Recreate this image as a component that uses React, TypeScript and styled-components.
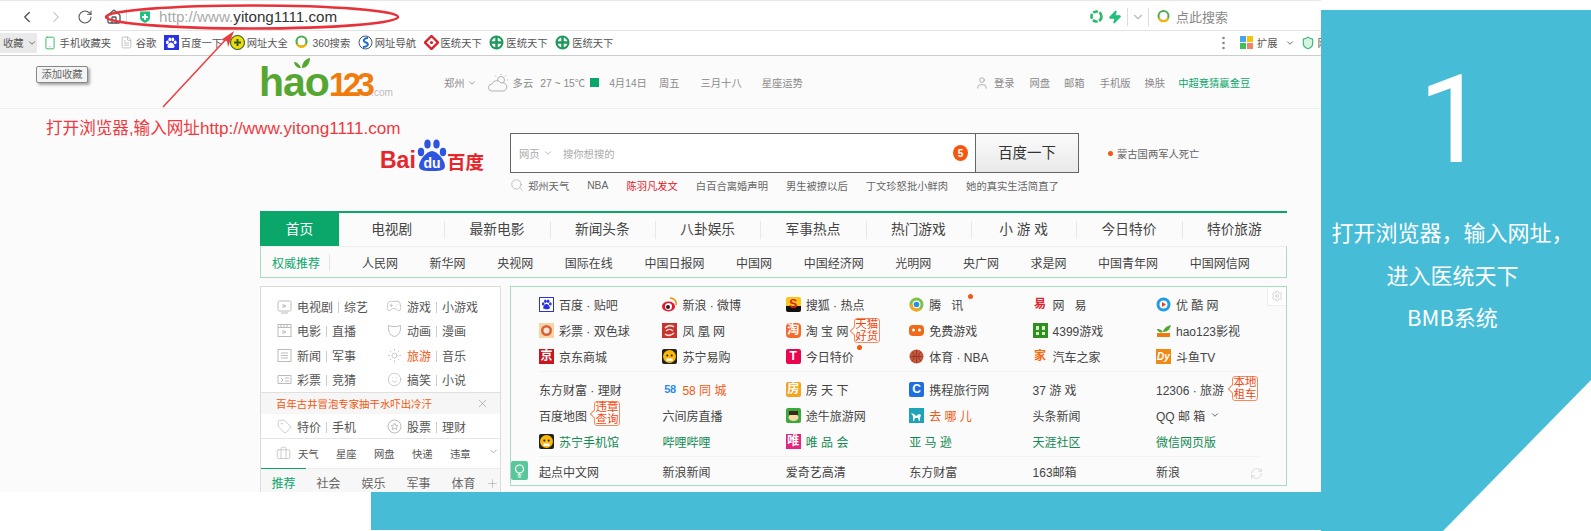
import React from 'react'
import styled, { createGlobalStyle } from 'styled-components'
import {
  Briefcase,
  ChevronDown,
  ChevronLeft,
  ChevronRight,
  FileText,
  Gamepad2,
  Home,
  Plus,
  RefreshCw,
  RotateCw,
  Search,
  Settings,
  Shield,
  Smartphone,
  Smile,
  Sun,
  Tag,
  User,
  X,
  Zap,
} from 'lucide-react'

const BLUE = '#46bcd7'
const GREEN = '#0ba76a'
const SANS = `'Liberation Sans', 'Noto Sans CJK SC', sans-serif`

const GlobalStyle = createGlobalStyle`
  html, body {
    margin: 0;
    padding: 0;
    background: #fff;
    font-family: ${SANS};
  }
`

const Page = styled.div`
  display: flex;
  width: 1591px;
  height: 531px;
  overflow: hidden;
  background: #fff;
`

const LeftColumn = styled.div`
  display: flex;
  flex-direction: column;
  width: 1321px;
  flex: none;
`

const Screenshot = styled.div`
  position: relative;
  height: 492px;
  overflow: hidden;
  background: #fbfbfb;
`

const BottomBand = styled.div`
  margin-left: 371px;
  height: 38px;
  background: ${BLUE};
`

const SidePanel = styled.aside`
  display: flex;
  flex-direction: column;
  align-items: center;
  flex: none;
  box-sizing: border-box;
  margin-top: 10px;
  padding-right: 7px;
  width: 270px;
  height: 521px;
  color: #fff;
  background: ${BLUE};
  clip-path: polygon(0 0, 100% 0, 100% 370px, 122px 100%, 0 100%);
`

const StepNumber = styled.div`
  margin-top: 36px;
  height: 150px;
  font: 400 122px/150px Roboto, ${SANS};
`

const StepLine = styled.div`
  height: 42.6px;
  font: 400 22px/42.6px 'Noto Sans CJK SC', ${SANS};
  white-space: nowrap;
`

const StepLines = styled.div`
  display: flex;
  flex-direction: column;
  align-items: center;
  margin-top: 14px;
`

/* browser chrome */
const Toolbar = styled.div`
  display: flex;
  align-items: center;
  box-sizing: border-box;
  height: 31px;
  padding: 2px 93px 0 18px;
  color: #555;
  background: #fff;
  border-top: 1px solid #e8e8e8;
  border-bottom: 1px solid #e4e4e4;
`

const NavButton = styled.span<{ $faded?: boolean }>`
  display: flex;
  justify-content: center;
  width: 18px;
  margin-right: 11px;
  color: ${(p) => (p.$faded ? '#ccc' : '#555')};
`

const ToolbarDivider = styled.span<{ $left: number }>`
  width: 1px;
  height: 18px;
  margin-left: ${(p) => p.$left}px;
  background: #ddd;
`

const UrlField = styled.div`
  display: flex;
  align-items: center;
  margin-left: 12px;
  font-size: 15.2px;
  color: #333;
`

const UrlScheme = styled.span`
  margin-left: 8px;
  color: #aaa;
`

const ToolbarEnd = styled.div`
  display: flex;
  align-items: center;
  margin-left: auto;
  font-size: 13px;
  color: #888;
`

const Bookmarks = styled.div`
  display: flex;
  align-items: center;
  box-sizing: border-box;
  height: 25px;
  padding-bottom: 1px;
  font-size: 10.3px;
  color: #555;
  background: #fff;
  border-bottom: 1px solid #ccc;
  white-space: nowrap;
`

const FavButton = styled.span`
  display: flex;
  align-items: center;
  gap: 3px;
  box-sizing: border-box;
  width: 38px;
  height: 20px;
  padding-left: 3px;
  margin-right: 6px;
  background: #e9e9e9;
`

const Bookmark = styled.span`
  display: flex;
  align-items: center;
  gap: 2px;
  margin-right: 7.6px;
`

const BookmarkIcon = styled.span`
  display: flex;
  justify-content: center;
  width: 15px;
`

const BookmarkEnd = styled.div`
  display: flex;
  align-items: center;
  gap: 3px;
  margin-left: 601px;
  flex: none;
`

/* hao123 header */
const Header = styled.div`
  display: flex;
  align-items: center;
  box-sizing: border-box;
  height: 53px;
  padding: 1px 0 0 259px;
  font-size: 10.3px;
  color: #8a8a8a;
  border-bottom: 1px solid #eee;
  white-space: nowrap;
`

const LogoMark = styled.div`
  position: relative;
  display: flex;
  align-items: baseline;
  margin-top: -1px;
  width: 136px;
  flex: none;
  font-family: ${SANS};
  font-weight: 700;
`

const LogoGreen = styled.span`
  font-size: 41px;
  line-height: 42px;
  letter-spacing: -1px;
  color: #56a632;
`

const LogoOrange = styled.span`
  font-size: 33px;
  letter-spacing: -4.6px;
  color: #ef7c0c;
`

const LogoDomain = styled.span`
  margin-left: 1px;
  font-size: 10px;
  font-weight: 400;
  color: #bbb;
`

const LogoLeaf = styled.svg`
  position: absolute;
  top: -4px;
  left: 35px;
`

const HeaderItem = styled.span<{ $left: number; $accent?: boolean }>`
  display: flex;
  align-items: center;
  gap: 2px;
  margin-left: ${(p) => p.$left}px;
  color: ${(p) => (p.$accent ? GREEN : 'inherit')};
`

const WeatherNext = styled.span`
  display: inline-block;
  width: 9px;
  height: 9px;
  margin-left: 3px;
  background: ${GREEN};
`

const Tooltip = styled.div`
  position: absolute;
  top: 66px;
  left: 36px;
  box-sizing: border-box;
  width: 52px;
  height: 17px;
  font-size: 10.3px;
  line-height: 15px;
  text-align: center;
  color: #666;
  background: #f4f4f4;
  border: 1px solid #888;
  border-radius: 2px;
  box-shadow: 2px 2px 3px rgba(0, 0, 0, 0.35);
`

/* search */
const SearchRow = styled.div`
  display: flex;
  margin-top: 24px;
  padding-left: 380px;
  height: 40px;
`

const BaiduLogo = styled.div`
  position: relative;
  display: flex;
  align-items: flex-end;
  width: 104px;
  height: 33px;
  margin-top: 5px;
  flex: none;
  font-weight: 700;
  color: #e5262b;
`

const BaiduLatin = styled.span`
  font-size: 23px;
  line-height: 21px;
  width: 37px;
`

const BaiduCjk = styled.span`
  margin-left: 30px;
  font: 700 18.5px/20px 'Noto Sans CJK SC', sans-serif;
`

const BaiduPaw = styled.svg`
  position: absolute;
  top: 0;
  left: 36px;
`

const SearchBox = styled.div`
  display: flex;
  align-items: center;
  box-sizing: border-box;
  width: 466px;
  height: 40px;
  margin-left: 26px;
  padding-left: 8px;
  font-size: 10.3px;
  color: #aaa;
  background: #fff;
  border: 1.5px solid #666;
`

const SearchScope = styled.span`
  display: flex;
  align-items: center;
  gap: 3px;
  width: 44px;
`

const SearchHint = styled.span`
  flex: 1;
`

const SearchCount = styled.span`
  display: flex;
  align-items: center;
  justify-content: center;
  width: 15px;
  height: 16px;
  margin-right: 7px;
  font-size: 10px;
  font-weight: 700;
  color: #fff;
  background: #f4570f;
  border-radius: 50%;
`

const SearchButton = styled.div`
  box-sizing: border-box;
  width: 103px;
  height: 40px;
  font-size: 14.4px;
  line-height: 38px;
  text-align: center;
  color: #333;
  background: linear-gradient(#fbfbfb, #e9e9e9);
  border: 1.5px solid #666;
  border-left: none;
`

const HotTopic = styled.div`
  display: flex;
  align-items: center;
  gap: 4px;
  margin-left: 29px;
  font-size: 10.3px;
  color: #666;
`

const OrangeDot = styled.span`
  width: 5px;
  height: 5px;
  background: #f4570f;
  border-radius: 50%;
`

const Suggestions = styled.div`
  display: flex;
  align-items: center;
  gap: 18px;
  margin-top: 4px;
  padding-left: 510px;
  height: 16px;
  font-size: 10.3px;
  color: #666;
  white-space: nowrap;
`

const Suggestion = styled.span<{ $hot?: boolean }>`
  display: flex;
  align-items: center;
  gap: 4px;
  color: ${(p) => (p.$hot ? '#e8141c' : 'inherit')};
`

/* channel nav */
const Main = styled.div`
  margin: 18px 0 0 260px;
  width: 1027px;
`

const ChannelNav = styled.nav`
  display: grid;
  grid-template-columns: 79px repeat(9, 1fr);
  box-sizing: border-box;
  height: 35px;
  border-top: 2px solid ${GREEN};
`

const Channel = styled.a<{ $active?: boolean }>`
  position: relative;
  font-size: 13.7px;
  line-height: 33px;
  text-align: center;
  white-space: pre;
  color: ${(p) => (p.$active ? '#fff' : '#444')};
  background: ${(p) => (p.$active ? GREEN : 'transparent')};

  & + &::before {
    content: '';
    position: absolute;
    top: 8px;
    left: 0;
    width: 1px;
    height: 18px;
    background: #e8e8e8;
  }
`

const Recommend = styled.div`
  display: flex;
  align-items: center;
  height: 32px;
  box-sizing: border-box;
  padding-left: 11px;
  font-size: 12px;
  color: #444;
  border: 1px solid #a9dcbd;
  border-top: 1px solid #eee;
  white-space: nowrap;
`

const RecommendTitle = styled.span`
  box-sizing: border-box;
  width: 58px;
  margin-right: 32px;
  color: ${GREEN};
  border-right: 1px solid #e4e4e4;
`

const RecommendLink = styled.span`
  margin-right: 31.6px;
`

const Columns = styled.div`
  display: flex;
  margin-top: 8px;
`

const ServicePanel = styled.div`
  box-sizing: border-box;
  width: 241px;
  height: 210px;
  margin-right: 9px;
  padding-top: 7px;
  flex: none;
  font-size: 12px;
  color: #555;
  background: #fff;
  border: 1px solid #dcdcdc;
`

const ServiceRow = styled.div<{ $tall?: boolean }>`
  display: grid;
  grid-template-columns: 110px 1fr;
  align-items: center;
  height: ${(p) => (p.$tall ? 24 : 24.5)}px;
  padding-left: 15px;
`

const Service = styled.span`
  display: flex;
  align-items: center;
  gap: 5px;
  white-space: nowrap;
`

const ServiceGlyph = styled.span`
  display: flex;
  justify-content: center;
  width: 16px;
  color: #bbb;
`

const ServiceSep = styled.i`
  display: inline-block;
  width: 1px;
  height: 11px;
  margin: 0 5px;
  vertical-align: -1px;
  background: #ccc;
`

const Accent = styled.span`
  color: #f4570f;
`

const NoticeBar = styled.div`
  display: flex;
  align-items: center;
  justify-content: space-between;
  box-sizing: border-box;
  height: 22px;
  padding: 0 11px 0 15px;
  font-size: 10.4px;
  color: #f4570f;
  background: #f6f6f6;
  border-top: 1px solid #e0e0e0;
`

const ToolsRow = styled.div`
  display: flex;
  align-items: center;
  box-sizing: border-box;
  height: 30px;
  padding-left: 15px;
  font-size: 10.3px;
  border-top: 1px solid #e6e6e6;
`

const ToolItem = styled.span`
  width: 38px;
`

const ToolIcon = styled.span`
  display: flex;
  width: 22px;
  color: #bbb;
`

const TabsRow = styled.div`
  display: flex;
  align-items: center;
  height: 24px;
  background: #f7f7f7;
  border-top: 1px solid #eee;
  color: #666;
`

const Tab = styled.span<{ $active?: boolean }>`
  box-sizing: border-box;
  width: 45px;
  height: 24px;
  padding-top: 2px;
  line-height: 26px;
  text-align: center;
  color: ${(p) => (p.$active ? GREEN : 'inherit')};
  box-shadow: ${(p) => (p.$active ? `0 -1px 0 0 ${GREEN}` : 'none')};
`

const LinkPanel = styled.div`
  position: relative;
  box-sizing: border-box;
  width: 777px;
  height: 200px;
  flex: none;
  padding-top: 4px;
  border: 1px solid #a9dcbd;
`

const LinkGroup = styled.div<{ $after: number }>`
  display: grid;
  grid-template-columns: repeat(6, 123.4px);
  grid-auto-rows: 26px;
  align-items: center;
  margin: 0 26px ${(p) => p.$after}px 28px;
  padding-bottom: ${(p) => (p.$after ? 2 : 0)}px;
  border-bottom: ${(p) => (p.$after ? '1px solid #f3f3f3' : 'none')};
`

const LinkCell = styled.a<{ $tone?: string }>`
  position: relative;
  display: flex;
  align-items: center;
  gap: 5px;
  height: 26px;
  font-size: 12px;
  white-space: pre;
  color: ${(p) => p.$tone ?? '#444'};
`

const CharIcon = styled.span<{ $bg?: string; $fg?: string }>`
  display: flex;
  align-items: center;
  justify-content: center;
  width: 15px;
  height: 15px;
  flex: none;
  font-size: 12px;
  font-weight: 700;
  line-height: 15px;
  color: ${(p) => p.$fg ?? '#fff'};
  background: ${(p) => p.$bg ?? 'transparent'};
  border-radius: 2px;
`

const Badge = styled.span<{ $left: number; $top: number }>`
  position: absolute;
  top: ${(p) => p.$top}px;
  left: ${(p) => p.$left}px;
  box-sizing: border-box;
  width: 26px;
  height: 25px;
  font-size: 11.5px;
  line-height: 11.5px;
  text-align: center;
  white-space: normal;
  color: #f4470f;
  background: #fff;
  border: 1px solid #f58a5c;
  border-radius: 3px;
  z-index: 1;

  &::before {
    content: '';
    position: absolute;
    top: 9px;
    left: -4px;
    width: 5px;
    height: 5px;
    background: #fff;
    border-left: 1px solid #f58a5c;
    border-bottom: 1px solid #f58a5c;
    transform: rotate(45deg);
  }
`

const Spot = styled.span<{ $left: number; $top: number }>`
  position: absolute;
  top: ${(p) => p.$top}px;
  left: ${(p) => p.$left}px;
  width: 5px;
  height: 5px;
  background: #f4570f;
  border-radius: 50%;
`

const IdeaTag = styled.span`
  position: absolute;
  top: 174px;
  left: 0;
  display: flex;
  align-items: center;
  justify-content: center;
  width: 17px;
  height: 19px;
  color: #fff;
  background: #59c79b;
  border-radius: 2px;
`

const SettingsTab = styled.span`
  position: absolute;
  top: 0;
  right: 0;
  display: flex;
  align-items: center;
  justify-content: center;
  width: 18px;
  height: 18px;
  color: #bbb;
  background: #fff;
  border-left: 1px solid #eee;
  border-bottom: 1px solid #eee;
`

const RefreshMark = styled.span`
  position: absolute;
  top: 179px;
  left: 739px;
  color: #ccc;
`

/* red pen annotation over the screenshot */
const Annotation = styled.svg`
  position: absolute;
  top: 0;
  left: 0;
  pointer-events: none;
`

const AnnotationText = styled.div`
  position: absolute;
  top: 118px;
  left: 46px;
  font-size: 16.6px;
  line-height: 22px;
  color: #f0383e;
  white-space: nowrap;
`

const AnnotationUrl = styled.span`
  font-size: 17.1px;
`

const Paw = ({ size = 11, color = '#2932e1' }: { size?: number; color?: string }) => (
  <svg width={size} height={size} viewBox="0 0 20 20" fill={color}>
    <ellipse cx="4" cy="9" rx="2.4" ry="3" />
    <ellipse cx="8" cy="4" rx="2.4" ry="3.2" />
    <ellipse cx="13" cy="4" rx="2.4" ry="3.2" />
    <ellipse cx="17" cy="9" rx="2.4" ry="3" />
    <path d="M10 9c-3 0-6 4-6 7 0 3 4 2.500 6 2.500S16 19 16 16c0-3-3-7-6-7z" />
  </svg>
)

const Ring = ({ color, inner }: { color: string; inner: string }) => (
  <svg width="15" height="15" viewBox="0 0 15 15">
    <circle cx="7.500" cy="7.500" r="5.500" fill="#fff" stroke={color} strokeWidth="3" />
    <path d="M6 5l4 2.500L6 10z" fill={inner} />
  </svg>
)

const Lion = () => (
  <svg width="15" height="15" viewBox="0 0 15 15">
    <rect width="15" height="15" rx="2" fill="#222" />
    <circle cx="7.500" cy="7.500" r="6.500" fill="#fbb80c" />
    <circle cx="5.300" cy="6.500" r="1" fill="#222" />
    <circle cx="9.700" cy="6.500" r="1" fill="#222" />
    <path d="M4.500 9.500h6v2.500h-6z" fill="#fff" />
  </svg>
)

const siteIcons: Record<string, React.ReactNode> = {
  baidu: (
    <CharIcon $bg="#fff" style={{ border: '1px solid #2932e1', boxSizing: 'border-box', borderRadius: 0 }}>
      <Paw />
    </CharIcon>
  ),
  weibo: (
    <svg width="15" height="15" viewBox="0 0 15 15">
      <ellipse cx="6.500" cy="9.500" rx="6.500" ry="5" fill="#e6162d" />
      <circle cx="6.500" cy="9.500" r="3.500" fill="#fff" />
      <circle cx="6" cy="10" r="2" fill="#222" />
      <path d="M8 1c4 0 7 3 6 7" fill="none" stroke="#f80" strokeWidth="1.500" />
    </svg>
  ),
  sohu: <CharIcon $bg="linear-gradient(#fbc41a 60%, #111 60%)" $fg="#d9211b">S</CharIcon>,
  tencent: (
    <svg width="15" height="15" viewBox="0 0 15 15">
      <circle cx="7.500" cy="7.500" r="5.500" fill="#fff" stroke="#7cc24a" strokeWidth="3" />
      <path d="M2 7.500a5.500 5.500 0 0 0 9 4.200" fill="none" stroke="#f5a623" strokeWidth="3" />
      <circle cx="7.500" cy="7.500" r="2.800" fill="#2b8ee0" />
    </svg>
  ),
  netease: <CharIcon $fg="#e3232c">易</CharIcon>,
  youku: <Ring color="#1f9ee8" inner="#f0383e" />,
  lottery: (
    <svg width="15" height="15" viewBox="0 0 15 15">
      <rect width="15" height="15" fill="#f6d6a8" />
      <circle cx="7.500" cy="7.500" r="5.500" fill="#d9603b" />
      <circle cx="7.500" cy="7.500" r="3" fill="#f8e6d0" />
    </svg>
  ),
  phoenix: (
    <svg width="15" height="15" viewBox="0 0 15 15">
      <rect width="15" height="15" fill="#c7342f" />
      <path d="M3 5c3-3 7-3 9-1M12 10c-3 3-7 3-9 1M4 8c2-2 5-2 7 0" fill="none" stroke="#f7dcd7" strokeWidth="1.600" />
    </svg>
  ),
  taobao: <CharIcon $bg="#f46a2c" style={{ borderRadius: 4 }}>淘</CharIcon>,
  games: (
    <svg width="15" height="15" viewBox="0 0 15 15">
      <rect y="2" width="15" height="11" rx="4" fill="#ef6a1a" />
      <circle cx="4.500" cy="7" r="1.500" fill="#fff" />
      <circle cx="10.500" cy="7" r="1.500" fill="#fff" />
    </svg>
  ),
  g4399: (
    <svg width="15" height="15" viewBox="0 0 15 15">
      <rect width="15" height="15" fill="#2f8f1f" />
      <path d="M3 3h3v4H3zM9 3h3v4H9zM3 9h3v3H3zM9 9h3v3H9z" fill="#d8f0c8" />
    </svg>
  ),
  hao: (
    <svg width="15" height="15" viewBox="0 0 15 15">
      <path d="M7 9C5 6 3 6 1 6c1 3 3 4 6 3zM7 9c1-4 4-6 8-7-1 4-3 7-8 7z" fill="#4ea72e" />
      <rect x="1" y="10" width="13" height="4" fill="#ef7c0c" />
    </svg>
  ),
  jd: <CharIcon $bg="#c9151e" style={{ borderRadius: 0 }}>京</CharIcon>,
  suning: <Lion />,
  tsale: <CharIcon $bg="#e8064f">T</CharIcon>,
  nba: (
    <svg width="15" height="15" viewBox="0 0 15 15">
      <circle cx="7.500" cy="7.500" r="7" fill="#c4573c" />
      <path d="M7.500 1v13M1 7.500h13M3 3c3 2 3 7 0 9M12 3c-3 2-3 7 0 9" fill="none" stroke="#8c3522" strokeWidth="0.800" />
    </svg>
  ),
  autohome: <CharIcon $fg="#f26b12">家</CharIcon>,
  douyu: <CharIcon $bg="#f08a17" style={{ borderRadius: 0, fontStyle: 'italic', fontSize: 10 }}>Dy</CharIcon>,
  tc58: <CharIcon $fg="#2b8ee0" style={{ fontSize: 11, letterSpacing: -0.5 }}>58</CharIcon>,
  fang: <CharIcon $bg="#f5a21c">房</CharIcon>,
  ctrip: <CharIcon $bg="#1f6fe0">C</CharIcon>,
  tuniu: (
    <svg width="15" height="15" viewBox="0 0 15 15">
      <rect width="15" height="15" rx="2" fill="#3aa83a" />
      <ellipse cx="7.500" cy="9.500" rx="5" ry="3.500" fill="#f6d9a6" />
      <path d="M3 3h9v4H3z" fill="#3b2a17" />
    </svg>
  ),
  qunar: (
    <svg width="15" height="15" viewBox="0 0 15 15">
      <rect width="15" height="15" fill="#1ea3b8" />
      <path d="M2 5l3 1 2 2 3-2 2 1-1 3v3h-1l-1-3H6l-1 3H4V8z" fill="#fff" />
    </svg>
  ),
  vip: <CharIcon $bg="#e4267c" style={{ borderRadius: 0 }}>唯</CharIcon>,
}

interface SiteLink {
  label: string
  icon?: string
  tone?: string
  badge?: [string, number, number]
  spot?: [number, number]
  caret?: boolean
}

const LINK_GREEN = '#138a52'
const LINK_ORANGE = '#f4570f'

const linkGroups: { after: number; links: SiteLink[] }[] = [
  {
    after: 4,
    links: [
      { label: '百度 · 贴吧', icon: 'baidu' },
      { label: '新浪 · 微博', icon: 'weibo' },
      { label: '搜狐 · 热点', icon: 'sohu' },
      { label: '腾   讯', icon: 'tencent', spot: [59, 3] },
      { label: '网   易', icon: 'netease' },
      { label: '优 酷 网', icon: 'youku' },
      { label: '彩票 · 双色球', icon: 'lottery' },
      { label: '凤 凰 网', icon: 'phoenix' },
      { label: '淘 宝 网', icon: 'taobao', badge: ['天猫好货', 68, 1] },
      { label: '免费游戏', icon: 'games' },
      { label: '4399游戏', icon: 'g4399' },
      { label: 'hao123影视', icon: 'hao' },
      { label: '京东商城', icon: 'jd' },
      { label: '苏宁易购', icon: 'suning' },
      { label: '今日特价', icon: 'tsale', spot: [71, 2] },
      { label: '体育 · NBA', icon: 'nba' },
      { label: '汽车之家', icon: 'autohome' },
      { label: '斗鱼TV', icon: 'douyu' },
    ],
  },
  {
    after: 1,
    links: [
      { label: '东方财富 · 理财' },
      { label: '58 同 城', icon: 'tc58', tone: LINK_ORANGE },
      { label: '房 天 下', icon: 'fang' },
      { label: '携程旅行网', icon: 'ctrip' },
      { label: '37 游 戏' },
      { label: '12306 · 旅游', badge: ['本地租车', 76, 0] },
      { label: '百度地图', badge: ['违章查询', 55, -1] },
      { label: '六间房直播' },
      { label: '途牛旅游网', icon: 'tuniu' },
      { label: '去 哪 儿', icon: 'qunar', tone: LINK_ORANGE },
      { label: '头条新闻' },
      { label: 'QQ 邮 箱', caret: true },
      { label: '苏宁手机馆', icon: 'suning', tone: LINK_GREEN },
      { label: '哔哩哔哩', tone: LINK_GREEN },
      { label: '唯 品 会', icon: 'vip', tone: LINK_GREEN },
      { label: '亚 马 逊', tone: LINK_GREEN },
      { label: '天涯社区', tone: LINK_GREEN },
      { label: '微信网页版', tone: LINK_GREEN },
    ],
  },
  {
    after: 0,
    links: [
      { label: '起点中文网' },
      { label: '新浪新闻' },
      { label: '爱奇艺高清' },
      { label: '东方财富' },
      { label: '163邮箱' },
      { label: '新浪' },
    ],
  },
]

const Pair = ({ a, b, hot }: { a: string; b: string; hot?: boolean }) => (
  <span>
    {hot ? <Accent>{a}</Accent> : a}
    <ServiceSep />
    {b}
  </span>
)

const ServiceSvg = ({ children }: { children: React.ReactNode }) => (
  <svg width="15" height="15" viewBox="0 0 15 15" fill="none" stroke="currentColor" strokeWidth="1">
    {children}
  </svg>
)

const tvIcon = (
  <ServiceSvg>
    <rect x="1" y="2" width="13" height="10" rx="1.500" />
    <path d="M6 5.500l3 1.500-3 1.500zM4 14h7" />
  </ServiceSvg>
)
const filmIcon = (
  <ServiceSvg>
    <rect x="1" y="1.500" width="13" height="12" />
    <path d="M1 4.500h13M4 1.500v3M7 1.500v3M10 1.500v3M6 7.500l3 1.500-3 1.500z" />
  </ServiceSvg>
)
const newsIcon = (
  <ServiceSvg>
    <rect x="1" y="1.500" width="13" height="12" />
    <path d="M4 5h7M4 7.500h7M4 10h7" />
  </ServiceSvg>
)
const ticketIcon = (
  <ServiceSvg>
    <path d="M1 3.500h13v8H1zM4 6l2 2-2 2M8 6h4M8 9h4" />
  </ServiceSvg>
)
const maskIcon = (
  <ServiceSvg>
    <path d="M1.500 2.500C5 4 10 4 13.500 2.500c.5 5-1 10-6 11-5-1-6.500-6-6-11z" />
  </ServiceSvg>
)
const starIcon = (
  <ServiceSvg>
    <circle cx="7.500" cy="7.500" r="6.500" />
    <path d="M7.500 4l1 2.200 2.400.3-1.700 1.700.4 2.400-2.100-1.200-2.100 1.200.4-2.400-1.700-1.700 2.400-.3z" />
  </ServiceSvg>
)

const serviceRows: [React.ReactNode, string, string, boolean][] = [
  [tvIcon, '电视剧', '综艺', false],
  [filmIcon, '电影', '直播', false],
  [newsIcon, '新闻', '军事', false],
  [ticketIcon, '彩票', '竞猜', false],
]

const serviceRowsRight: [React.ReactNode, string, string, boolean][] = [
  [<Gamepad2 size={16} strokeWidth={1.2} />, '游戏', '小游戏', false],
  [maskIcon, '动画', '漫画', false],
  [<Sun size={15} strokeWidth={1.2} />, '旅游', '音乐', true],
  [<Smile size={15} strokeWidth={1.2} />, '搞笑', '小说', false],
]

const channels = ['电视剧', '最新电影', '新闻头条', '八卦娱乐', '军事热点', '热门游戏', '小 游 戏', '今日特价', '特价旅游']
const recommends = ['人民网', '新华网', '央视网', '国际在线', '中国日报网', '中国网', '中国经济网', '光明网', '央广网', '求是网', '中国青年网', '中国网信网']
const bookmarks: [React.ReactNode, string][] = [
  [<Smartphone size={14} color="#35b558" strokeWidth={1.6} />, '手机收藏夹'],
  [<FileText size={13} color="#aaa" strokeWidth={1.3} />, '谷歌'],
  [<CharIcon $bg="#2932e1" style={{ borderRadius: 0 }}><Paw size={12} color="#fff" /></CharIcon>, '百度一下'],
  [
    <svg width="15" height="15" viewBox="0 0 15 15">
      <circle cx="7.500" cy="7.500" r="7" fill="#f5d90a" stroke="#2f7d32" strokeWidth="1.200" />
      <path d="M6.500 4h2v2.500H11v2H8.500V11h-2V8.500H4v-2h2.500z" fill="#2f5d1d" />
    </svg>,
    '网址大全',
  ],
  [
    <svg width="15" height="15" viewBox="0 0 15 15">
      <circle cx="6.500" cy="6.500" r="5" fill="none" stroke="#4caf50" strokeWidth="2.200" />
      <path d="M2 9a5 5 0 0 0 9 0" fill="none" stroke="#f5b50a" strokeWidth="2.200" />
    </svg>,
    '360搜索',
  ],
  [
    <svg width="15" height="15" viewBox="0 0 15 15">
      <circle cx="7.500" cy="7.500" r="6.500" fill="#fff" stroke="#456" strokeWidth="1" />
      <path d="M10 3C6 3 4 6 8 7.500S9 12 5 12" fill="none" stroke="#1f6fd0" strokeWidth="2" />
    </svg>,
    '网址导航',
  ],
  [
    <svg width="15" height="15" viewBox="0 0 15 15">
      <path d="M7.500 1l6.500 6.500L7.500 14 1 7.500z" fill="none" stroke="#d9232b" strokeWidth="2.400" />
      <circle cx="7.500" cy="7.500" r="1.600" fill="#d9232b" />
    </svg>,
    '医统天下',
  ],
  [
    <svg width="15" height="15" viewBox="0 0 15 15">
      <circle cx="7.500" cy="7.500" r="6" fill="none" stroke="#1d9a5b" strokeWidth="2" />
      <path d="M7.500 2v11M2 7.500h11" stroke="#1d9a5b" strokeWidth="2.500" />
    </svg>,
    '医统天下',
  ],
  [
    <svg width="15" height="15" viewBox="0 0 15 15">
      <circle cx="7.500" cy="7.500" r="6" fill="none" stroke="#1d9a5b" strokeWidth="2" />
      <path d="M7.500 2v11M2 7.500h11" stroke="#1d9a5b" strokeWidth="2.500" />
    </svg>,
    '医统天下',
  ],
]

const hints = ['白百合离婚声明', '男生被撩以后', '丁文珍怒批小鲜肉', '她的真实生活简直了']

export default function App() {
  return (
    <Page>
      <GlobalStyle />
      <LeftColumn>
        <Screenshot>
          <Toolbar>
            <NavButton><ChevronLeft size={20} strokeWidth={1.8} /></NavButton>
            <NavButton $faded><ChevronRight size={20} strokeWidth={1.5} /></NavButton>
            <NavButton><RotateCw size={16} strokeWidth={1.6} /></NavButton>
            <NavButton><Home size={16} strokeWidth={2} /></NavButton>
            <ToolbarDivider $left={-8} />
            <UrlField>
              <svg width="12" height="14" viewBox="0 0 12 14">
                <path d="M1 1.500h10v6c0 3-3 4.500-5 5.500-2-1-5-2.500-5-5.500z" fill="#1fc27d" />
                <path d="M5 4h2v2h2v2H7v2H5V8H3V6h2z" fill="#fff" />
              </svg>
              <UrlScheme>http://www.</UrlScheme>
              yitong1111.com
            </UrlField>
            <ToolbarEnd>
              <svg width="13" height="13" viewBox="0 0 13 13">
                <circle cx="6.500" cy="6.500" r="5" fill="none" stroke="#2db96b" strokeWidth="2.600" strokeDasharray="5 1.500" />
              </svg>
              <Zap size={14} color="#21c07d" fill="#21c07d" style={{ marginLeft: 5 }} />
              <ToolbarDivider $left={5} />
              <ChevronDown size={14} color="#bbb" style={{ margin: '0 3px' }} />
              <ToolbarDivider $left={0} />
              <svg width="15" height="15" viewBox="0 0 15 15" style={{ margin: '0 4px 0 8px' }}>
                <circle cx="6.500" cy="7" r="5" fill="none" stroke="#4caf50" strokeWidth="2" />
                <path d="M2 9.500a5 5 0 0 0 9 0" fill="none" stroke="#f5b50a" strokeWidth="2" />
              </svg>
              点此搜索
            </ToolbarEnd>
          </Toolbar>
          <Bookmarks>
            <FavButton>收藏<ChevronDown size={10} /></FavButton>
            {bookmarks.map(([icon, label], index) => (
              <Bookmark key={index}>
                <BookmarkIcon>{icon}</BookmarkIcon>
                {label}
              </Bookmark>
            ))}
            <BookmarkEnd>
              <svg width="3" height="14" viewBox="0 0 3 14" fill="#888">
                <circle cx="1.500" cy="2" r="1.300" />
                <circle cx="1.500" cy="7" r="1.300" />
                <circle cx="1.500" cy="12" r="1.300" />
              </svg>
              <svg width="14" height="14" viewBox="0 0 14 14" style={{ marginLeft: 12 }}>
                <rect width="6" height="6" fill="#46a6e8" />
                <rect x="7" width="6" height="6" fill="#f5c30a" />
                <rect y="7" width="6" height="6" fill="#3cc060" />
                <rect x="7" y="7" width="6" height="6" fill="#f2826b" />
              </svg>
              扩展
              <ChevronDown size={10} style={{ margin: '0 3px 0 4px' }} />
              <Shield size={14} color="#3cb878" fill="#d5f2e2" />
              网
            </BookmarkEnd>
          </Bookmarks>

          <Header>
            <LogoMark>
              <LogoGreen>hao</LogoGreen>
              <LogoOrange>123</LogoOrange>
              <LogoDomain>.com</LogoDomain>
              <LogoLeaf width="16" height="12" viewBox="0 0 16 12">
                <path d="M7 11C5 6 2 5 0 5c1 4 3 6 7 6zM8 11c0-5 3-9 8-10 0 5-3 10-8 10z" fill="#56a632" />
              </LogoLeaf>
            </LogoMark>
            <HeaderItem $left={49}>郑州<ChevronDown size={10} /></HeaderItem>
            <HeaderItem $left={11}>
              <svg width="21" height="18" viewBox="0 0 21 18" fill="none" stroke="#aaa" strokeWidth="0.900">
                <circle cx="13" cy="6" r="3.500" />
                <path d="M13 0v1M18 1.500l-1 1M20 6h-1M7 1.500l1 1" />
                <path d="M4 17a3.500 3.500 0 0 1 0-7 5 5 0 0 1 9-1 4 4 0 0 1 3 8z" fill="#fbfbfb" />
              </svg>
            </HeaderItem>
            <HeaderItem $left={4}>多云</HeaderItem>
            <HeaderItem $left={7}>27 ~ 15℃<WeatherNext /></HeaderItem>
            <HeaderItem $left={10}>4月14日</HeaderItem>
            <HeaderItem $left={12}>周五</HeaderItem>
            <HeaderItem $left={21}>三月十八</HeaderItem>
            <HeaderItem $left={20}>星座运势</HeaderItem>
            <HeaderItem $left={172}><User size={14} strokeWidth={1.1} /></HeaderItem>
            <HeaderItem $left={5}>登录</HeaderItem>
            <HeaderItem $left={15}>网盘</HeaderItem>
            <HeaderItem $left={14}>邮箱</HeaderItem>
            <HeaderItem $left={15}>手机版</HeaderItem>
            <HeaderItem $left={14}>换肤</HeaderItem>
            <HeaderItem $left={13} $accent>中超竞猜赢金豆</HeaderItem>
          </Header>

          <SearchRow>
            <BaiduLogo>
              <BaiduLatin>Bai</BaiduLatin>
              <BaiduCjk>百度</BaiduCjk>
              <BaiduPaw width="32" height="34" viewBox="0 0 32 34">
                <g fill="#2f55e0">
                  <ellipse cx="5" cy="14" rx="3.200" ry="4.200" />
                  <ellipse cx="11.500" cy="6" rx="3.200" ry="4.500" />
                  <ellipse cx="20.500" cy="6" rx="3.200" ry="4.500" />
                  <ellipse cx="27" cy="14" rx="3.200" ry="4.200" />
                  <path d="M16 13c-5 0-13 9-13 15 0 5 7 5 13 5s13 0 13-5c0-6-8-15-13-15z" />
                </g>
                <text x="16" y="30" textAnchor="middle" fontSize="14" fontWeight="700" fill="#fff" fontFamily="Liberation Sans">du</text>
              </BaiduPaw>
            </BaiduLogo>
            <SearchBox>
              <SearchScope>网页<ChevronDown size={10} /></SearchScope>
              <SearchHint>搜你想搜的</SearchHint>
              <SearchCount>5</SearchCount>
            </SearchBox>
            <SearchButton>百度一下</SearchButton>
            <HotTopic><OrangeDot />蒙古国两军人死亡</HotTopic>
          </SearchRow>
          <Suggestions>
            <Suggestion>
              <Search size={14} strokeWidth={1.2} color="#aaa" />
              郑州天气
            </Suggestion>
            <Suggestion>NBA</Suggestion>
            <Suggestion $hot>陈羽凡发文</Suggestion>
            {hints.map((hint) => (
              <Suggestion key={hint}>{hint}</Suggestion>
            ))}
          </Suggestions>

          <Main>
            <ChannelNav>
              <Channel $active>首页</Channel>
              {channels.map((channel) => (
                <Channel key={channel}>{channel}</Channel>
              ))}
            </ChannelNav>
            <Recommend>
              <RecommendTitle>权威推荐</RecommendTitle>
              {recommends.map((site) => (
                <RecommendLink key={site}>{site}</RecommendLink>
              ))}
            </Recommend>
            <Columns>
              <ServicePanel>
                {serviceRows.map((left, index) => {
                  const right = serviceRowsRight[index]
                  return (
                    <ServiceRow key={left[1]}>
                      <Service>
                        <ServiceGlyph>{left[0]}</ServiceGlyph>
                        <Pair a={left[1]} b={left[2]} />
                      </Service>
                      <Service>
                        <ServiceGlyph>{right[0]}</ServiceGlyph>
                        <Pair a={right[1]} b={right[2]} hot={right[3]} />
                      </Service>
                    </ServiceRow>
                  )
                })}
                <NoticeBar>
                  百年古井冒泡专家抽干水吓出冷汗
                  <X size={13} color="#999" strokeWidth={1.2} />
                </NoticeBar>
                <ServiceRow $tall>
                  <Service>
                    <ServiceGlyph><Tag size={15} strokeWidth={1.2} /></ServiceGlyph>
                    <Pair a="特价" b="手机" />
                  </Service>
                  <Service>
                    <ServiceGlyph>{starIcon}</ServiceGlyph>
                    <Pair a="股票" b="理财" />
                  </Service>
                </ServiceRow>
                <ToolsRow>
                  <ToolIcon><Briefcase size={15} strokeWidth={1.2} /></ToolIcon>
                  <ToolItem>天气</ToolItem>
                  <ToolItem>星座</ToolItem>
                  <ToolItem>网盘</ToolItem>
                  <ToolItem>快递</ToolItem>
                  <ToolItem>违章</ToolItem>
                  <ChevronDown size={11} color="#aaa" style={{ marginTop: -4 }} />
                </ToolsRow>
                <TabsRow>
                  <Tab $active>推荐</Tab>
                  <Tab>社会</Tab>
                  <Tab>娱乐</Tab>
                  <Tab>军事</Tab>
                  <Tab>体育</Tab>
                  <Plus size={13} color="#aaa" strokeWidth={1.2} style={{ marginTop: 4 }} />
                </TabsRow>
              </ServicePanel>

              <LinkPanel>
                {linkGroups.map((group, index) => (
                  <LinkGroup key={index} $after={group.after}>
                    {group.links.map((site) => (
                      <LinkCell key={site.label} $tone={site.tone}>
                        {site.icon && siteIcons[site.icon]}
                        {site.label}
                        {site.caret && <ChevronDown size={10} color="#444" />}
                        {site.spot && <Spot $left={site.spot[0]} $top={site.spot[1]} />}
                        {site.badge && (
                          <Badge $left={site.badge[1]} $top={site.badge[2]}>{site.badge[0]}</Badge>
                        )}
                      </LinkCell>
                    ))}
                  </LinkGroup>
                ))}
                <IdeaTag>
                  <svg width="11" height="14" viewBox="0 0 11 14" fill="none" stroke="#fff" strokeWidth="1.200">
                    <circle cx="5.500" cy="5" r="4" />
                    <path d="M3.500 11h4M4 13h3M5.500 9v2" />
                  </svg>
                </IdeaTag>
                <SettingsTab><Settings size={12} strokeWidth={1.2} /></SettingsTab>
                <RefreshMark><RefreshCw size={13} strokeWidth={1.2} /></RefreshMark>
              </LinkPanel>
            </Columns>
          </Main>

          <Tooltip>添加收藏</Tooltip>
          <AnnotationText>打开浏览器,输入网址<AnnotationUrl>http://www.yitong1111.com</AnnotationUrl></AnnotationText>
          <Annotation width="500" height="120" viewBox="0 0 500 120">
            <ellipse cx="252" cy="17" rx="146" ry="11.500" fill="none" stroke="#e8323a" strokeWidth="2.600" />
            <path d="M163 107L229 36" stroke="#ee3b3f" strokeWidth="1.500" />
            <path d="M234 31l-13 9 6 1 1 6z" fill="#ee3b3f" />
          </Annotation>
        </Screenshot>
        <BottomBand />
      </LeftColumn>
      <SidePanel>
        <StepNumber>1</StepNumber>
        <StepLines>
          <StepLine>打开浏览器，输入网址，</StepLine>
          <StepLine>进入医统天下</StepLine>
          <StepLine>BMB系统</StepLine>
        </StepLines>
      </SidePanel>
    </Page>
  )
}
